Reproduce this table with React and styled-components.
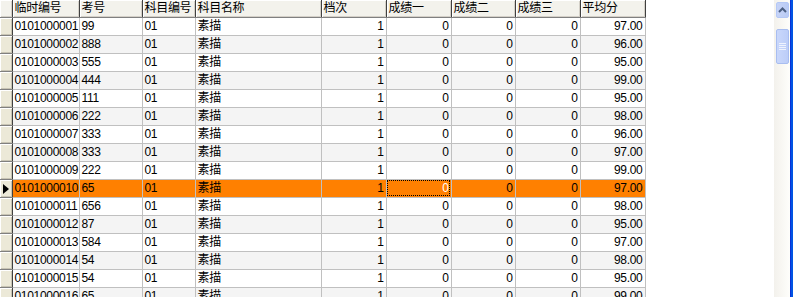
import styled, { createGlobalStyle } from "styled-components";

const GlobalStyle = createGlobalStyle`
  html, body {
    margin: 0;
    padding: 0;
    background: #ffffff;
  }
`;

const rows = [
  ["0101000001", "99", "97.00"],
  ["0101000002", "888", "96.00"],
  ["0101000003", "555", "95.00"],
  ["0101000004", "444", "99.00"],
  ["0101000005", "111", "95.00"],
  ["0101000006", "222", "98.00"],
  ["0101000007", "333", "96.00"],
  ["0101000008", "333", "97.00"],
  ["0101000009", "222", "99.00"],
  ["0101000010", "65", "97.00"],
  ["0101000011", "656", "98.00"],
  ["0101000012", "87", "95.00"],
  ["0101000013", "584", "97.00"],
  ["0101000014", "54", "98.00"],
  ["0101000015", "54", "95.00"],
  ["0101000016", "65", "99.00"],
];

const columns = [
  { title: "临时编号", width: 67 },
  { title: "考号", width: 63 },
  { title: "科目编号", width: 53 },
  { title: "科目名称", width: 126 },
  { title: "档次", width: 65 },
  { title: "成绩一", width: 65 },
  { title: "成绩二", width: 64 },
  { title: "成绩三", width: 65 },
  { title: "平均分", width: 65 },
];

const SELECTED = 9;

const Window = styled.div`
  width: 794px;
  height: 297px;
  display: flex;
  overflow: hidden;
  background: #ffffff;
  font-family: "Liberation Sans", "Noto Sans CJK SC", sans-serif;
  font-size: 12px;
  letter-spacing: -0.3px;
  color: #000000;
`;

const GridArea = styled.div`
  flex: 1;
  overflow: hidden;
  background: #ffffff;
`;

const Table = styled.table`
  border-collapse: collapse;
  table-layout: fixed;
  width: 645px;
`;

const HeadCell = styled.th`
  height: 17px;
  padding: 0 0 0 2px;
  box-sizing: border-box;
  text-align: left;
  font-weight: normal;
  white-space: nowrap;
  overflow: hidden;
  background: #f3f2ec;
  border-right: 1px solid #404040;
  border-bottom: 1px solid #808080;
  box-shadow: inset 1px 1px 0 #ffffff, inset -1px -1px 0 #d4d0c8;
  line-height: 16px;
`;

const RowHead = styled.td`
  width: 12px;
  height: 18px;
  padding: 0;
  box-sizing: border-box;
  background: #ece9d8;
  border-right: 1px solid #404040;
  border-bottom: 1px solid #808080;
  box-shadow: inset 1px 1px 0 #ffffff, inset -1px -1px 0 #c8c4b4;
  position: relative;
`;

const Arrow = styled.span`
  position: absolute;
  left: 3px;
  top: 4px;
  width: 0;
  height: 0;
  border-top: 5px solid transparent;
  border-bottom: 5px solid transparent;
  border-left: 6px solid #000000;
`;

const Row = styled.tr`
  background: ${(p) => (p.$selected ? "#ff8000" : p.$alt ? "#f4f4f4" : "#ffffff")};
`;

const Cell = styled.td`
  height: 18px;
  padding: ${(p) => (p.$right ? "0 2px 0 0" : "0 0 0 2px")};
  box-sizing: border-box;
  text-align: ${(p) => (p.$right ? "right" : "left")};
  white-space: nowrap;
  overflow: hidden;
  border-right: 1px solid #c0c0c0;
  border-bottom: 1px solid #c0c0c0;
  line-height: 17px;
  color: ${(p) => (p.$current ? "#ffffff" : "#000000")};
  outline: ${(p) => (p.$current ? "1px dotted #000000" : "none")};
  outline-offset: -2px;
`;

const ScrollBar = styled.div`
  width: 17px;
  margin-right: 3px;
  padding: 2px 1px 0 2px;
  box-sizing: border-box;
  display: flex;
  flex-direction: column;
  gap: 11px;
  background: linear-gradient(to right, #f3f1ec, #fefefb);
  border-right: 1px solid #0831d9;
  box-shadow: 2px 0 0 #0054e3;
`;

const UpButton = styled.div`
  height: 14px;
  border: 1px solid #b4c8f6;
  border-radius: 2px;
  background: linear-gradient(to right, #c6d3f7, #b9cbf5);
  display: flex;
  align-items: center;
  justify-content: center;
`;

const Thumb = styled.div`
  height: 33px;
  border: 1px solid #a8bdf0;
  border-radius: 2px;
  background: linear-gradient(to right, #c9d7fb, #bccdf8);
  display: flex;
  align-items: center;
  justify-content: center;
`;

function App() {
  return (
    <>
      <GlobalStyle />
      <Window>
        <GridArea>
          <Table>
            <colgroup>
              <col style={{ width: 12 }} />
              {columns.map((c) => (
                <col key={c.title} style={{ width: c.width }} />
              ))}
            </colgroup>
            <thead>
              <tr>
                <HeadCell />
                {columns.map((c) => (
                  <HeadCell key={c.title}>{c.title}</HeadCell>
                ))}
              </tr>
            </thead>
            <tbody>
              {rows.map((r, i) => (
                <Row key={r[0]} $alt={i % 2 === 1} $selected={i === SELECTED}>
                  <RowHead>{i === SELECTED && <Arrow />}</RowHead>
                  <Cell>{r[0]}</Cell>
                  <Cell>{r[1]}</Cell>
                  <Cell>01</Cell>
                  <Cell>素描</Cell>
                  <Cell $right>1</Cell>
                  <Cell $right $current={i === SELECTED}>0</Cell>
                  <Cell $right>0</Cell>
                  <Cell $right>0</Cell>
                  <Cell $right>{r[2]}</Cell>
                </Row>
              ))}
            </tbody>
          </Table>
        </GridArea>
        <ScrollBar>
          <UpButton>
            <svg width="9" height="6" viewBox="0 0 9 6">
              <path d="M1 5 L4.5 1.5 L8 5" fill="none" stroke="#4d6185" strokeWidth="2" />
            </svg>
          </UpButton>
          <Thumb>
            <svg width="7" height="8" viewBox="0 0 7 8">
              <path d="M0 0.5H7M0 2.5H7M0 4.5H7M0 6.5H7" stroke="#eef3fe" strokeWidth="1" />
            </svg>
          </Thumb>
        </ScrollBar>
      </Window>
    </>
  );
}

export default App;
